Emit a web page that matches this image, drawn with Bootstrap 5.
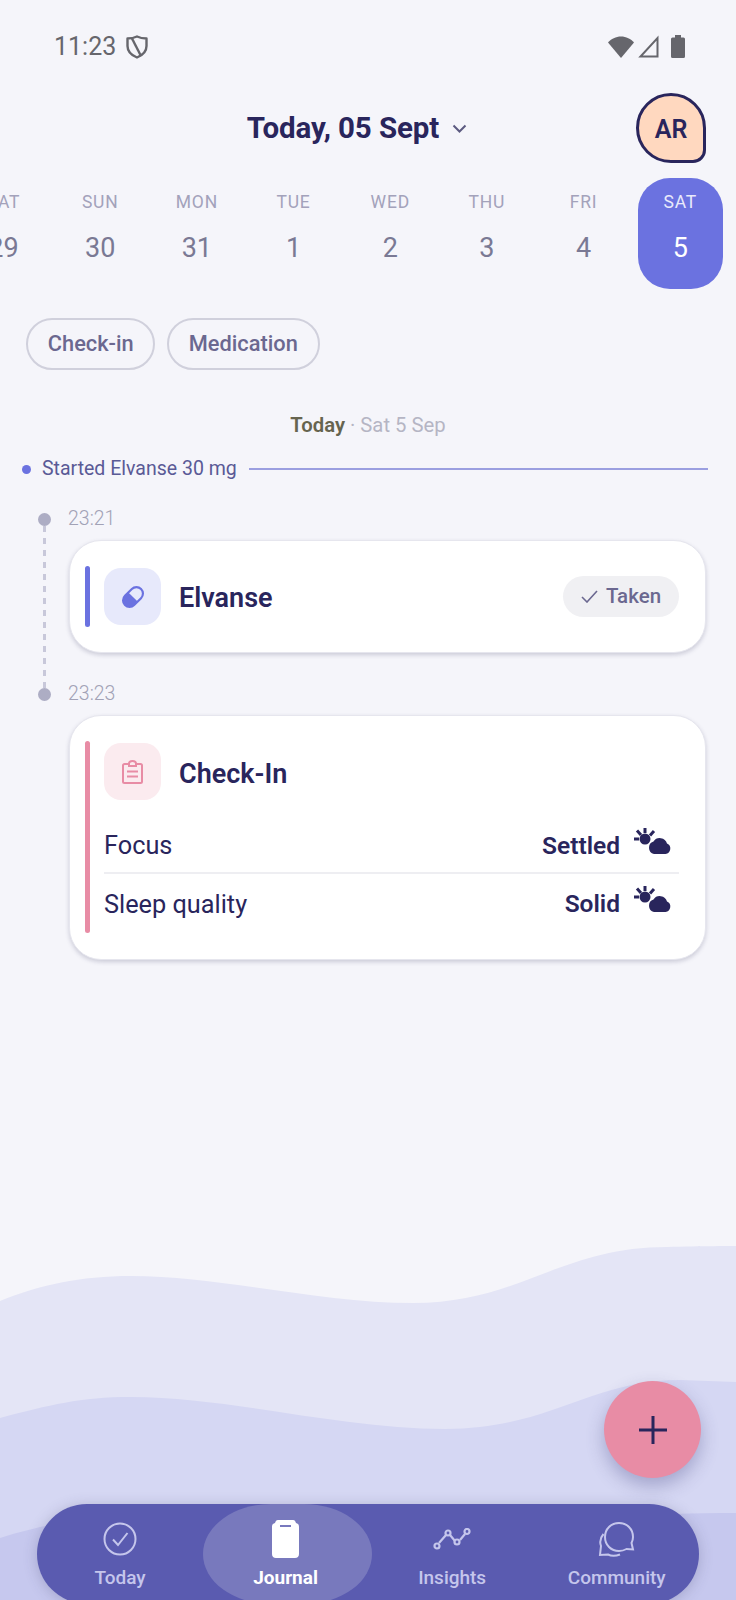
<!DOCTYPE html>
<html lang="en">
  <head>
    <meta charset="UTF-8" />
    <meta content="width=device-width, initial-scale=1.0" name="viewport" />
    <title>Journal</title>
    <link href="https://cdn.jsdelivr.net/npm/bootstrap@5.3.2/dist/css/bootstrap.min.css" rel="stylesheet" />
    <style>
      body { margin: 0; background: #f5f5fa; font-family: Roboto, "Liberation Sans", sans-serif; color: #29255c; }
      .app-shell { height: 1600px; overflow: hidden; position: relative; background: #f5f5fa; }
      .app-shell > * { position: relative; }
      .app-shell > .waves { position: absolute; left: 0; top: 1200px; width: 736px; height: 400px; }

      .status-row { height: 93px; padding: 0 51px 0 54px; color: #66666c; font-size: 25px; }
      .status-row svg { display: block; }
      .shield-ic { margin-left: 10px; }
      .batt-ic { margin-left: 12px; }

      .head-row { display: grid; grid-template-columns: 1fr auto 1fr; height: 70px; padding: 0 30px 0 8px; }
      .head-title { font-size: 29.5px; font-weight: 700; line-height: 70px; letter-spacing: -.1px; }
      .chev-ic { margin-left: 13px; }
      .avatar-blob { width: 70px; height: 70px; padding-top: 3px; background: #ffd8bf; border: 3px solid #29255c; border-radius: 35px 35px 13px 35px; font-size: 25px; font-weight: 600; }

      .day-strip { margin: 15px 0 0 -39px; gap: 11.7px; width: 800px; }
      .day-cell { width: 85px; height: 111px; flex: none; color: #7a7994; border-radius: 32px; padding-top: 11px; }
      .day-cell .wk { font-size: 17.5px; letter-spacing: .8px; color: #a3a2bb; line-height: 26px; }
      .day-cell .dn { font-size: 27px; line-height: 40px; margin-top: 13px; }
      .day-cell.on { background: #6b72e0; color: #fff; }
      .day-cell.on .wk { color: #e9eafb; }

      .chip-row { margin: 29px 0 0 26px; gap: 11.5px; }
      .chip-btn { height: 52px; padding: 0 19.8px; font-size: 21.8px; font-weight: 500; color: #6b6890; border: 2px solid #d0d0dc; border-radius: 26px; line-height: 48px; }
      .chip-btn:hover { color: #6b6890; border-color: #d0d0dc; }

      .day-label { margin-top: 41px; font-size: 20.3px; line-height: 28px; color: #b5b5c4; }
      .day-label b { color: #66644f; font-weight: 600; }

      .started-row { margin: 16px 28px 0 22px; height: 28px; font-size: 19.5px; color: #5a5a96; }
      .started-dot { width: 9px; height: 9px; background: #6b72e0; border-radius: 50%; margin-right: 11px; }
      .started-line { height: 2px; background: #9b9fe0; margin-left: 12px; }

      .tl-wrap { margin-top: 24px; padding: 0 30px 0 38px; }
      .tl-rail { width: 13px; padding-top: 6px; flex: none; }
      .tl-dot { width: 13px; height: 13px; background: #adadc4; border-radius: 50%; flex: none; }
      .tl-dash { width: 2.5px; flex: 1; margin: 0 auto -6px; background: repeating-linear-gradient(to bottom, #c8c8da 0 6px, transparent 6px 12px); }
      .tl-body { margin-left: 18px; }
      .tl-gap { padding-bottom: 29px; }
      .tl-time { height: 24px; line-height: 24px; font-size: 19.5px; color: #a2a2b6; margin: 0 0 9px -1px; font-weight: 300; }
      .log-card { border: 1px solid #e6e6ee; border-radius: 32px; box-shadow: 0 2px 4px rgba(60, 60, 100, .22); padding: 25px 26px 25px 15px; }
      .card-tall { padding-bottom: 26px; }
      .log-bar { width: 5px; border-radius: 3px; flex: none; margin-right: 14px; }
      .bar-blue { background: #6b72e0; height: 61px; }
      .bar-pink { background: #e88ca5; height: 192px; }
      .log-icon { width: 57px; height: 57px; border-radius: 17px; flex: none; margin-right: 18px; }
      .ic-blue { background: #e7e9fb; }
      .ic-pink { background: #fbebef; margin-top: 2px; }
      .log-name { font-size: 27px; font-weight: 600; padding-top: 3px; }
      .ic-pink + .log-name { padding-top: 7px; }
      .taken-pill { height: 41px; width: 116px; background: #f0f0f3; border-radius: 21px; font-size: 20.5px; font-weight: 500; color: #6b6890; }
      .log-row { font-size: 25.3px; }
      .row-top { height: 54px; margin-top: 20px; border-bottom: 2px solid #eeeef2; }
      .row-low { height: 58px; padding-top: 3px; }
      .log-row strong { font-weight: 600; font-size: 24.5px; margin-right: 14px; }
      .wx-ic { margin: -11px 8px 0 0; }

      .fab-btn { position: absolute !important; left: 604px; top: 1381px; width: 97px; height: 97px; background: #e88ca5; border-radius: 50%; box-shadow: 0 8px 18px rgba(60, 60, 120, .32); }

      .bottom-nav { margin: auto 37px -4px 37px; padding-left: .75px; height: 100px; background: #5a5bb0; border-radius: 50px; overflow: hidden; box-shadow: 0 2px 14px rgba(60, 60, 100, .25); }
      .nav-slot { flex: 1 1 0; padding-top: 12px; color: #c5c6ec; font-size: 19px; font-weight: 500; line-height: 24px; }
      .slot-ic { height: 46px; margin-bottom: 4px; }
      .nav-slot.on { margin: 0 -2px 0 1px; padding-right: 4px; background: #7879bd; border-radius: 50% / 62%; color: #fff; font-weight: 700; }
    </style>
  </head>

  <body>
    <div class="app-shell d-flex flex-column">
      <svg class="waves" viewBox="0 0 736 400">
        <path fill="#e4e5f6" d="M0 101C40 85 80 76 131 76C220 76 320 103 413 103C520 103 560 47 667 47C700 46 736 46 736 46V400H0Z" />
        <path fill="#d5d7f3" d="M0 218C50 205 80 197 131 197C230 197 340 229 445 229C550 229 590 180 680 180L736 182V400H0Z" />
        <path fill="#c6c8ee" d="M0 338C50 322 100 315 160 315L500 320C560 320 650 313 736 313V400H0Z" />
      </svg>

      <div class="status-row d-flex align-items-center">
        <span>11:23</span>
        <svg class="shield-ic" width="22" height="24" viewBox="0 0 22 24" fill="none" stroke="#66666c" stroke-width="2.4" stroke-linejoin="round">
          <path d="M11 1.5C14 3 17 3.5 20.5 3.5V11C20.5 16.5 16 20.5 11 22.5C6 20.5 1.5 16.5 1.5 11V3.5C5 3.5 8 3 11 1.5Z" />
          <path d="M6 3.5L15 21" />
        </svg>
        <svg class="ms-auto" width="26" height="22" viewBox="0 0 26 22" fill="#66666c"><path d="M13 22L0 6.5C3 3 8 .5 13 .5S23 3 26 6.5Z" /></svg>
        <svg class="ms-1" width="21" height="23" viewBox="0 0 21 23" fill="none" stroke="#66666c" stroke-width="2"><path d="M19.5 3V21.5H2.5Z" /></svg>
        <svg class="batt-ic" width="14" height="23" viewBox="0 0 14 23" fill="#66666c"><path d="M4 0H10V2.5H12.5A1.5 1.5 0 0 1 14 4V21.5A1.5 1.5 0 0 1 12.5 23H1.5A1.5 1.5 0 0 1 0 21.5V4A1.5 1.5 0 0 1 1.5 2.5H4Z" /></svg>
      </div>

      <div class="head-row">
        <div></div>
        <div class="head-title d-flex align-items-center">
          Today, 05 Sept
          <svg class="chev-ic" width="15" height="9" viewBox="0 0 15 9" fill="none" stroke="#5c5a80" stroke-width="2"><path d="M1.5 1.5L7.5 7.5L13.5 1.5" /></svg>
        </div>
        <div class="d-flex justify-content-end">
          <div class="avatar-blob d-flex align-items-center justify-content-center">AR</div>
        </div>
      </div>

      <div class="day-strip d-flex text-center">
        <div class="day-cell"><div class="wk">SAT</div><div class="dn">29</div></div>
        <div class="day-cell"><div class="wk">SUN</div><div class="dn">30</div></div>
        <div class="day-cell"><div class="wk">MON</div><div class="dn">31</div></div>
        <div class="day-cell"><div class="wk">TUE</div><div class="dn">1</div></div>
        <div class="day-cell"><div class="wk">WED</div><div class="dn">2</div></div>
        <div class="day-cell"><div class="wk">THU</div><div class="dn">3</div></div>
        <div class="day-cell"><div class="wk">FRI</div><div class="dn">4</div></div>
        <div class="day-cell on"><div class="wk">SAT</div><div class="dn">5</div></div>
      </div>

      <div class="chip-row d-flex">
        <button class="btn chip-btn" type="button">Check-in</button>
        <button class="btn chip-btn" type="button">Medication</button>
      </div>

      <div class="day-label text-center"><b>Today</b> · Sat 5 Sep</div>

      <div class="started-row d-flex align-items-center">
        <span class="started-dot"></span>
        <span>Started Elvanse 30 mg</span>
        <span class="started-line flex-grow-1"></span>
      </div>

      <div class="tl-wrap">
        <div class="d-flex">
          <div class="tl-rail d-flex flex-column">
            <span class="tl-dot"></span>
            <span class="tl-dash"></span>
          </div>
          <div class="tl-body tl-gap flex-grow-1">
            <div class="tl-time">23:21</div>
            <div class="card log-card flex-row align-items-center">
              <span class="log-bar bar-blue"></span>
              <div class="log-icon ic-blue d-flex align-items-center justify-content-center">
                <svg width="26" height="26" viewBox="0 0 24 24">
                  <g transform="rotate(-45 12 12)">
                    <rect x="1.5" y="6" width="21" height="12" rx="6" fill="none" stroke="#6b72e0" stroke-width="2" />
                    <path d="M12 6H7.5A6 6 0 0 0 7.5 18H12Z" fill="#6b72e0" />
                  </g>
                </svg>
              </div>
              <span class="log-name">Elvanse</span>
              <span class="taken-pill ms-auto d-flex align-items-center justify-content-center">
                <svg class="me-2" width="17" height="13" viewBox="0 0 17 13" fill="none" stroke="#6b6890" stroke-width="1.6"><path d="M1 7L6 12L16 1" /></svg>
                Taken
              </span>
            </div>
          </div>
        </div>

        <div class="d-flex">
          <div class="tl-rail d-flex flex-column"><span class="tl-dot"></span></div>
          <div class="tl-body flex-grow-1">
            <div class="tl-time">23:23</div>
            <div class="card log-card card-tall flex-row">
              <span class="log-bar bar-pink"></span>
              <div class="flex-grow-1">
                <div class="d-flex align-items-center">
                  <div class="log-icon ic-pink d-flex align-items-center justify-content-center">
                    <svg width="21" height="24" viewBox="0 0 21 24" fill="none" stroke="#e88ca5" stroke-width="2">
                      <path d="M7 4H2.5A1.5 1.5 0 0 0 1 5.5V21.5A1.5 1.5 0 0 0 2.5 23H18.5A1.5 1.5 0 0 0 20 21.5V5.5A1.5 1.5 0 0 0 18.5 4H14" />
                      <path d="M7 6V3.5A3.5 2.5 0 0 1 14 3.5V6Z" />
                      <path d="M5 11.5H16M5 16.5H16" />
                    </svg>
                  </div>
                  <span class="log-name">Check-In</span>
                </div>
                <div class="log-row row-top d-flex align-items-center">
                  <span>Focus</span>
                  <strong class="ms-auto">Settled</strong>
                  <svg class="wx-ic" width="37" height="26" viewBox="0 0 37 26" fill="#29255c">
                    <circle cx="11" cy="11" r="5.5" />
                    <path d="M11 0V5M3 2.5L7 7M20 3L16 7.5M0 11H5" stroke="#29255c" stroke-width="3" />
                    <path d="M20 26H31.5A5.5 5.5 0 0 0 33 15.5A7.5 7.5 0 0 0 19.5 13.5A6.5 6.5 0 0 0 20 26Z" />
                  </svg>
                </div>
                <div class="log-row row-low d-flex align-items-center">
                  <span>Sleep quality</span>
                  <strong class="ms-auto">Solid</strong>
                  <svg class="wx-ic" width="37" height="26" viewBox="0 0 37 26" fill="#29255c">
                    <circle cx="11" cy="11" r="5.5" />
                    <path d="M11 0V5M3 2.5L7 7M20 3L16 7.5M0 11H5" stroke="#29255c" stroke-width="3" />
                    <path d="M20 26H31.5A5.5 5.5 0 0 0 33 15.5A7.5 7.5 0 0 0 19.5 13.5A6.5 6.5 0 0 0 20 26Z" />
                  </svg>
                </div>
              </div>
            </div>
          </div>
        </div>
      </div>

      <div class="fab-btn d-flex align-items-center justify-content-center">
        <svg width="28" height="28" viewBox="0 0 28 28" stroke="#29255c" stroke-width="3"><path d="M14 0V28M0 14H28" /></svg>
      </div>

      <nav class="bottom-nav d-flex text-center">
        <a class="nav-slot d-flex flex-column align-items-center text-decoration-none">
          <span class="slot-ic d-flex align-items-center">
            <svg width="34" height="34" viewBox="0 0 34 34" fill="none" stroke="#c5c6ec" stroke-width="2"><circle cx="17" cy="17" r="15.5" /><path d="M10 17.5L15 23L24.5 11" /></svg>
          </span>
          Today
        </a>
        <a class="nav-slot on d-flex flex-column align-items-center text-decoration-none">
          <span class="slot-ic d-flex align-items-center">
            <svg width="27" height="38" viewBox="0 0 27 38"><path fill="#fff" d="M6 0H21C23 0 23.5 1.5 24 3C26 3.5 27 4.5 27 7V34C27 36.5 25.5 38 23 38H4C1.5 38 0 36.5 0 34V7C0 4.5 1 3.5 3 3C3.5 1.5 4 0 6 0Z" /><path d="M8 6H19" stroke="#7879bd" stroke-width="2" /></svg>
          </span>
          Journal
        </a>
        <a class="nav-slot d-flex flex-column align-items-center text-decoration-none">
          <span class="slot-ic d-flex align-items-center">
            <svg width="38" height="22" viewBox="0 0 38 22" fill="none" stroke="#c5c6ec" stroke-width="2.2"><path d="M6 15L13 7M17 7L22 13M27 12L32 6" /><circle cx="4" cy="18" r="2.5" /><circle cx="15" cy="5" r="2.5" /><circle cx="24" cy="14" r="2.5" /><circle cx="34" cy="3.5" r="2.5" /></svg>
          </span>
          Insights
        </a>
        <a class="nav-slot d-flex flex-column align-items-center text-decoration-none">
          <span class="slot-ic d-flex align-items-center">
            <svg width="37" height="35" viewBox="0 0 37 35" fill="none" stroke="#c5c6ec" stroke-width="2">
              <path d="M21 1C13 1 7 7 7 15S13 29 21 29C24 29 26 28.4 28.5 27L35 27.5L33.5 21C34.5 19 35 17 35 15C35 7 29 1 21 1Z" />
              <path d="M5.5 12C2.5 15.5 1.5 20 3 24L2 33L10 32.5C13 34 18 34 22 32.5" />
            </svg>
          </span>
          Community
        </a>
      </nav>
    </div>

    <script src="https://cdn.jsdelivr.net/npm/bootstrap@5.3.2/dist/js/bootstrap.bundle.min.js"></script>
  </body>
</html>
